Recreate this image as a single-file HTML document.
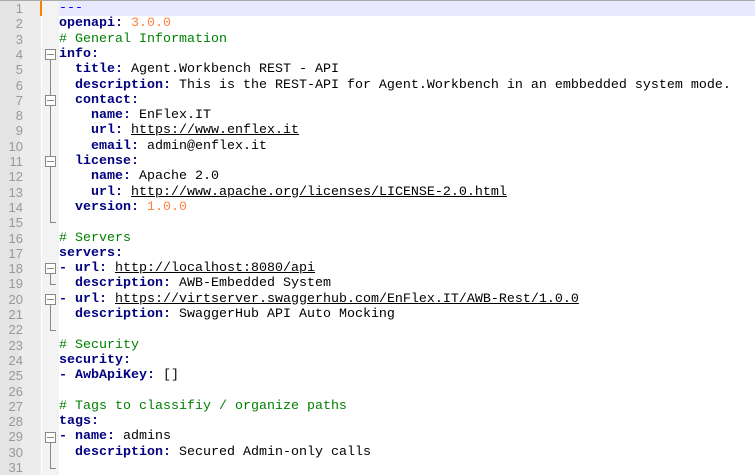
<!DOCTYPE html>
<html><head><style>
body{margin:0;width:755px;height:475px;overflow:hidden;background:#fff;font-family:"Liberation Mono",monospace;font-size:13.33px;position:relative}
#num{position:absolute;left:0;top:0;width:20px;height:475px;background:#e4e4e4}
#num2{position:absolute;left:20px;top:0;width:21px;height:475px;background:#ececec}
#fold{position:absolute;left:42px;top:0;width:17px;height:475px;background:#f3f3f3}
.hl{position:absolute;left:59px;right:0;top:1px;height:15px;background:#e8e8ff}
.mark{position:absolute;left:40px;top:1px;width:2px;height:15px;background:#ff8000}
.n{position:absolute;left:0;width:23px;text-align:right;color:#999;font-family:"Liberation Sans",sans-serif;font-size:13px;line-height:15.3px}
.l{position:absolute;left:59px;white-space:pre;line-height:15.3px;color:#000}
.k{color:#000080;font-weight:bold}
.c{color:#008000}
.o{color:#ff8040}
.d{color:#0000ff}
u{text-decoration:underline}
.box{position:absolute;left:45px;width:11px;height:11px;border:1px solid #888;background:#fff;box-sizing:border-box}
.box:after{content:"";position:absolute;left:1px;right:1px;top:4px;height:1px;background:#888}
.v{position:absolute;left:50px;width:1px;background:#888}
.h{position:absolute;left:50px;width:6px;height:1px;background:#888}
#top{position:absolute;left:0;top:0;right:0;height:1px;background:#aaa}
</style></head><body>
<div id="num"></div><div id="num2"></div><div id="fold"></div>
<div class="hl"></div><div class="mark"></div>
<div id="top"></div>
<div class="n" style="top:1px">1</div><div class="n" style="top:16.3px">2</div><div class="n" style="top:31.6px">3</div><div class="n" style="top:46.9px">4</div><div class="n" style="top:62.2px">5</div><div class="n" style="top:77.5px">6</div><div class="n" style="top:92.8px">7</div><div class="n" style="top:108.1px">8</div><div class="n" style="top:123.4px">9</div><div class="n" style="top:138.7px">10</div><div class="n" style="top:154px">11</div><div class="n" style="top:169.3px">12</div><div class="n" style="top:184.6px">13</div><div class="n" style="top:199.9px">14</div><div class="n" style="top:215.2px">15</div><div class="n" style="top:230.5px">16</div><div class="n" style="top:245.8px">17</div><div class="n" style="top:261.1px">18</div><div class="n" style="top:276.4px">19</div><div class="n" style="top:291.7px">20</div><div class="n" style="top:307px">21</div><div class="n" style="top:322.3px">22</div><div class="n" style="top:337.6px">23</div><div class="n" style="top:352.9px">24</div><div class="n" style="top:368.2px">25</div><div class="n" style="top:383.5px">26</div><div class="n" style="top:398.8px">27</div><div class="n" style="top:414.1px">28</div><div class="n" style="top:429.4px">29</div><div class="n" style="top:444.7px">30</div><div class="n" style="top:460px">31</div>

<div class="v" style="top:58px;height:165px"></div><div class="h" style="top:222px"></div>
<div class="box" style="top:49px"></div><div class="box" style="top:95px"></div><div class="box" style="top:156px"></div>
<div class="v" style="top:270px;height:14px"></div><div class="h" style="top:284px"></div>
<div class="box" style="top:263px"></div>
<div class="v" style="top:300px;height:30px"></div><div class="h" style="top:330px"></div>
<div class="box" style="top:294px"></div>
<div class="v" style="top:438px;height:30px"></div><div class="h" style="top:468px"></div>
<div class="box" style="top:432px"></div>

<div class="l" style="top:1px"><span class="d">---</span></div>
<div class="l" style="top:16.3px"><span class="k">openapi:</span> <span class="o">3.0.0</span></div>
<div class="l" style="top:31.6px"><span class="c"># General Information</span></div>
<div class="l" style="top:46.9px"><span class="k">info:</span></div>
<div class="l" style="top:62.2px">  <span class="k">title:</span> Agent.Workbench REST - API</div>
<div class="l" style="top:77.5px">  <span class="k">description:</span> This is the REST-API for Agent.Workbench in an embbedded system mode.</div>
<div class="l" style="top:92.8px">  <span class="k">contact:</span></div>
<div class="l" style="top:108.1px">    <span class="k">name:</span> EnFlex.IT</div>
<div class="l" style="top:123.4px">    <span class="k">url:</span> <u>https://www.enflex.it</u></div>
<div class="l" style="top:138.7px">    <span class="k">email:</span> admin@enflex.it</div>
<div class="l" style="top:154px">  <span class="k">license:</span></div>
<div class="l" style="top:169.3px">    <span class="k">name:</span> Apache 2.0</div>
<div class="l" style="top:184.6px">    <span class="k">url:</span> <u>http://www.apache.org/licenses/LICENSE-2.0.html</u></div>
<div class="l" style="top:199.9px">  <span class="k">version:</span> <span class="o">1.0.0</span></div>
<div class="l" style="top:230.5px"><span class="c"># Servers</span></div>
<div class="l" style="top:245.8px"><span class="k">servers:</span></div>
<div class="l" style="top:261.1px"><span class="k">- url:</span> <u>http://localhost:8080/api</u></div>
<div class="l" style="top:276.4px">  <span class="k">description:</span> AWB-Embedded System</div>
<div class="l" style="top:291.7px"><span class="k">- url:</span> <u>https://virtserver.swaggerhub.com/EnFlex.IT/AWB-Rest/1.0.0</u></div>
<div class="l" style="top:307px">  <span class="k">description:</span> SwaggerHub API Auto Mocking</div>
<div class="l" style="top:337.6px"><span class="c"># Security</span></div>
<div class="l" style="top:352.9px"><span class="k">security:</span></div>
<div class="l" style="top:368.2px"><span class="k">- AwbApiKey:</span> []</div>
<div class="l" style="top:398.8px"><span class="c"># Tags to classifiy / organize paths</span></div>
<div class="l" style="top:414.1px"><span class="k">tags:</span></div>
<div class="l" style="top:429.4px"><span class="k">- name:</span> admins</div>
<div class="l" style="top:444.7px">  <span class="k">description:</span> Secured Admin-only calls</div>
</body></html>
